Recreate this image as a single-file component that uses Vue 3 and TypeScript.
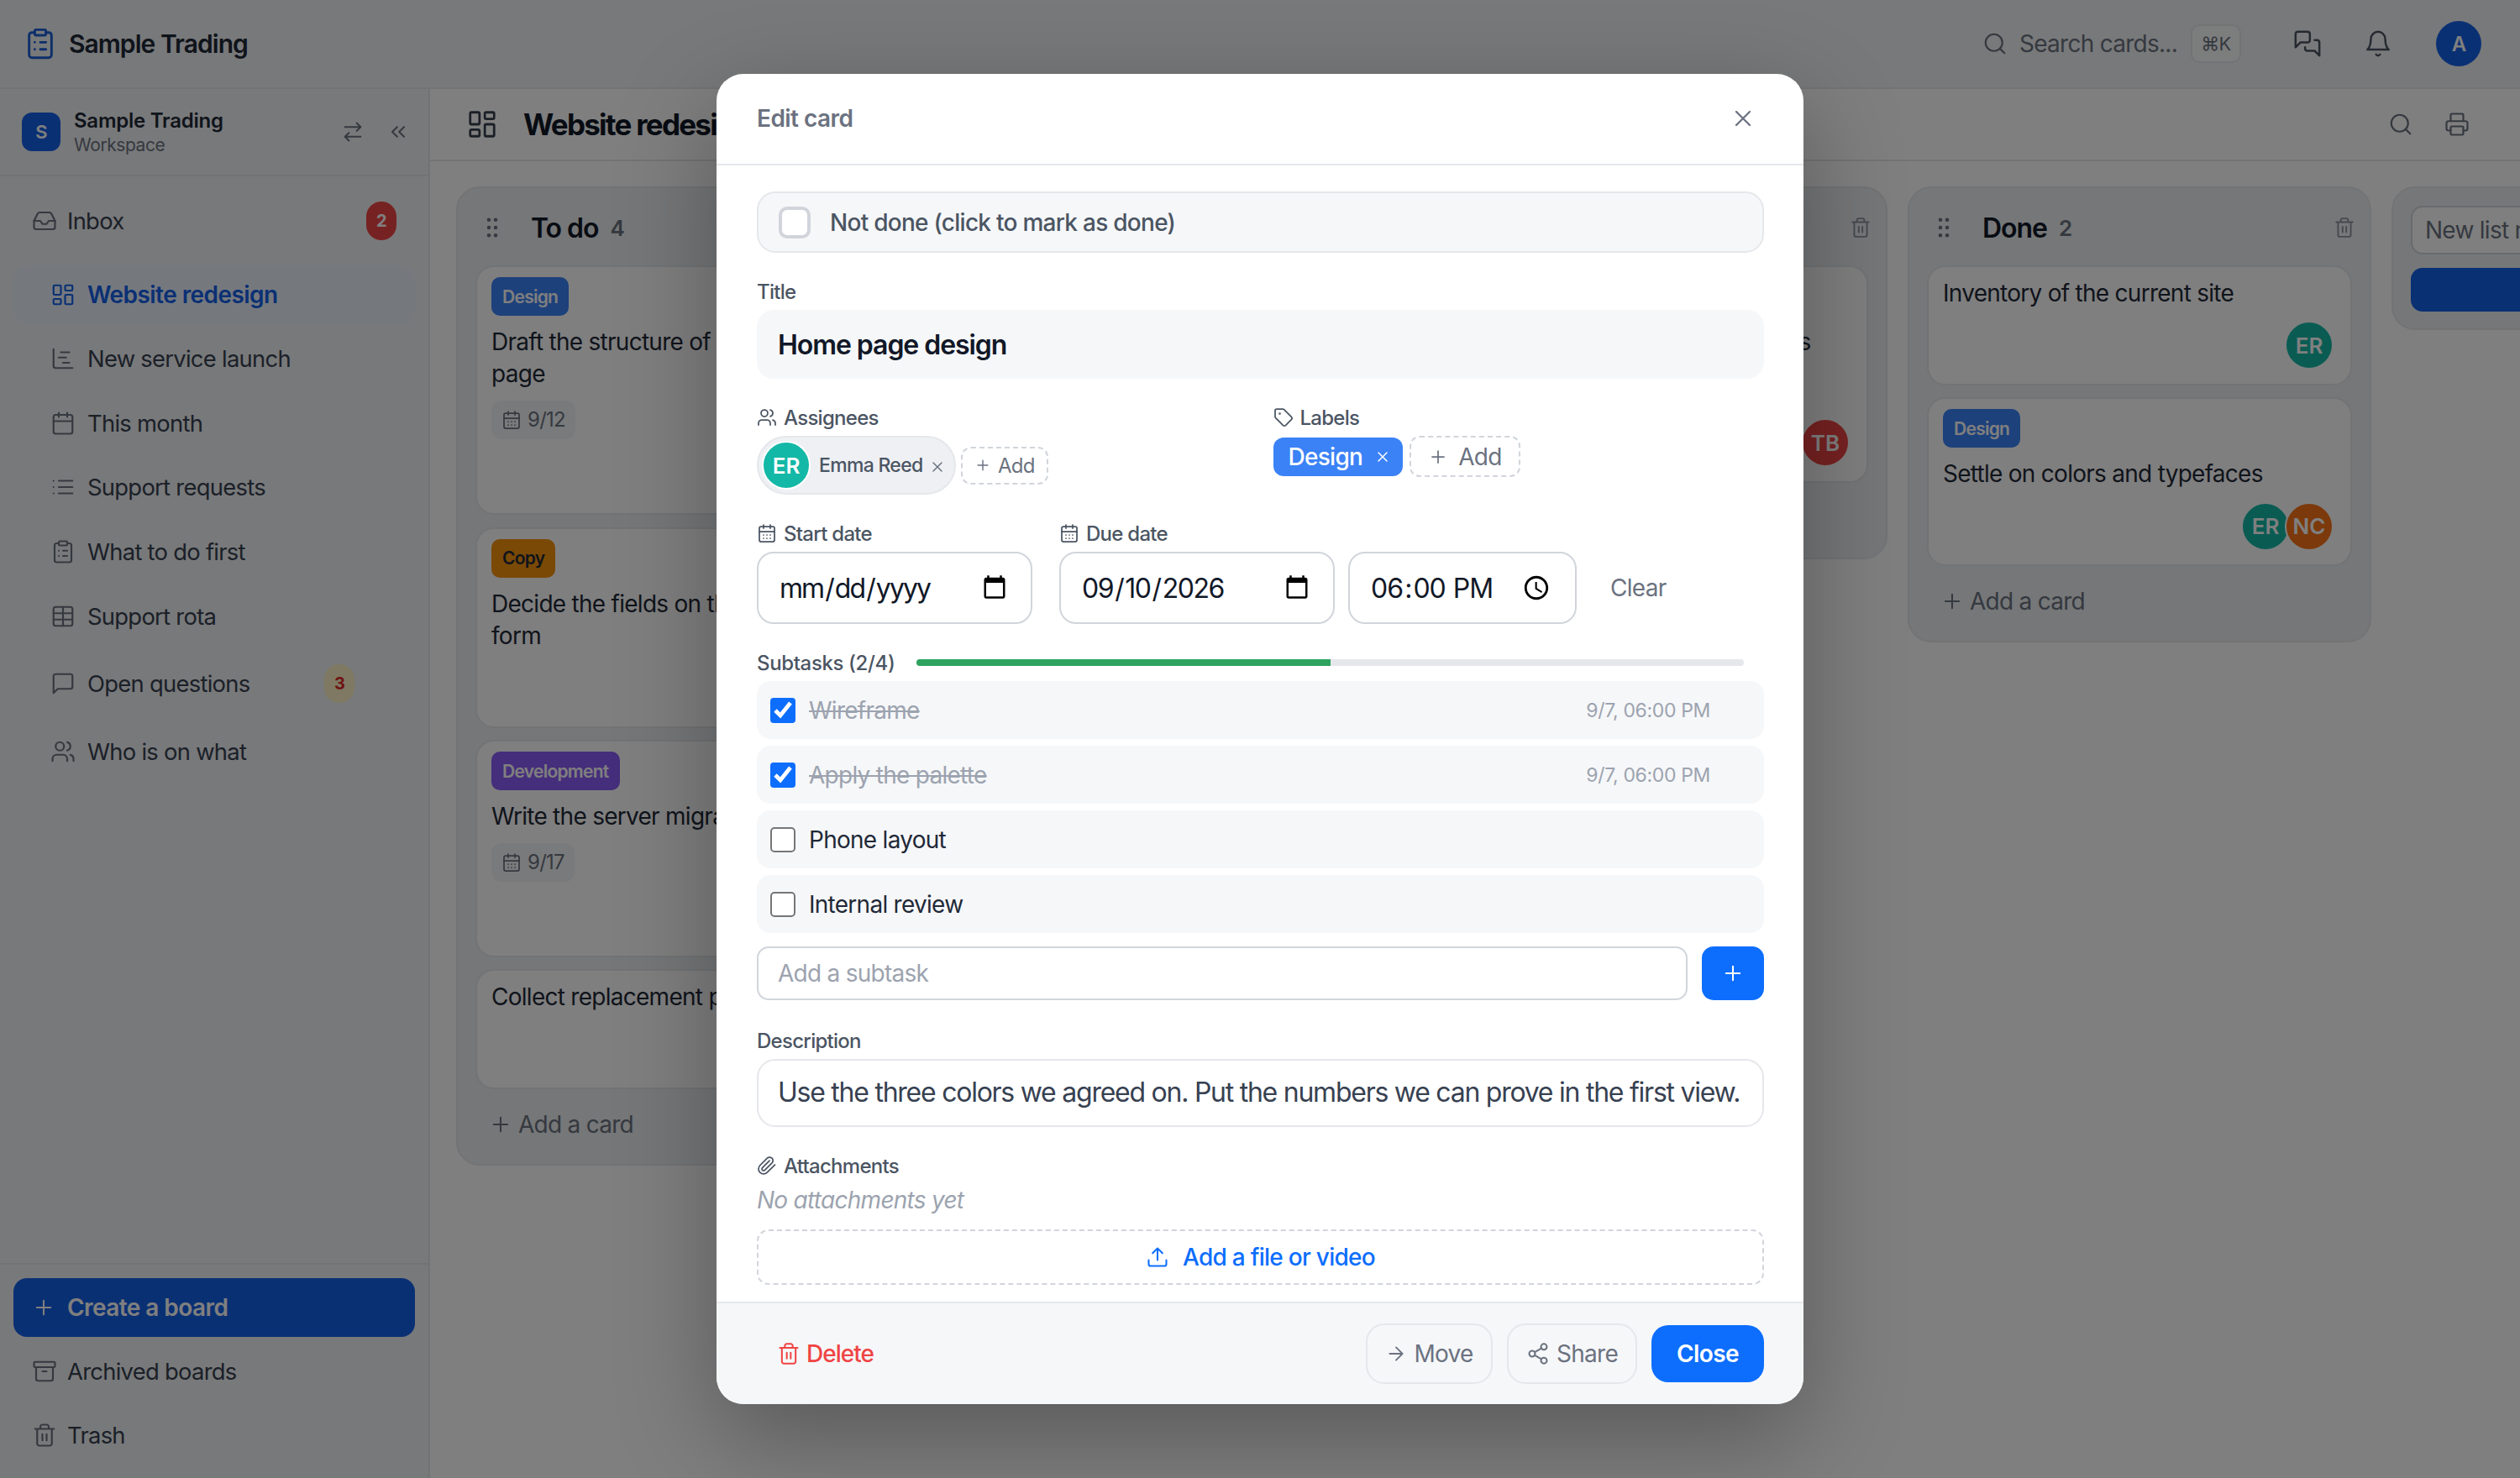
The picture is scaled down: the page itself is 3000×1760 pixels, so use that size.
<script setup lang="ts">
interface Card {
  tag?: { name: string; color: string; dark?: boolean }
  text: string
  date?: string
  people: { initials: string; color: string }[]
}

const icons: Record<string, string> = {
  clipboard: '<rect x="8" y="2" width="8" height="4" rx="1"/><path d="M16 4h2a2 2 0 0 1 2 2v14a2 2 0 0 1-2 2H6a2 2 0 0 1-2-2V6a2 2 0 0 1 2-2h2"/><path d="M12 11h4M12 16h4M8 11h.01M8 16h.01"/>',
  dashboard: '<rect x="3" y="3" width="7" height="9" rx="1"/><rect x="14" y="3" width="7" height="5" rx="1"/><rect x="14" y="12" width="7" height="9" rx="1"/><rect x="3" y="16" width="7" height="5" rx="1"/>',
  swap: '<path d="m16 3 4 4-4 4M20 7H4M8 21l-4-4 4-4M4 17h16"/>',
  chevrons: '<path d="m11 17-5-5 5-5M18 17l-5-5 5-5"/>',
  inbox: '<path d="M22 12h-6l-2 3h-4l-2-3H2"/><path d="M5.45 5.11 2 12v6a2 2 0 0 0 2 2h16a2 2 0 0 0 2-2v-6l-3.45-6.89A2 2 0 0 0 16.76 4H7.24a2 2 0 0 0-1.79 1.11z"/>',
  gantt: '<path d="M10 6h8M12 16h6M3 3v16a2 2 0 0 0 2 2h16M8 11h7"/>',
  calendar: '<path d="M8 2v4M16 2v4"/><rect x="3" y="4" width="18" height="18" rx="2"/><path d="M3 10h18"/>',
  calendarDays: '<path d="M8 2v4M16 2v4"/><rect x="3" y="4" width="18" height="18" rx="2"/><path d="M3 10h18M8 14h.01M12 14h.01M16 14h.01M8 18h.01M12 18h.01M16 18h.01"/>',
  list: '<path d="M3 6h.01M3 12h.01M3 18h.01M8 6h13M8 12h13M8 18h13"/>',
  table: '<path d="M12 3v18"/><rect x="3" y="3" width="18" height="18" rx="2"/><path d="M3 9h18M3 15h18"/>',
  message: '<path d="M21 15a2 2 0 0 1-2 2H7l-4 4V5a2 2 0 0 1 2-2h14a2 2 0 0 1 2 2z"/>',
  messages: '<path d="M14 9a2 2 0 0 1-2 2H6l-4 4V4a2 2 0 0 1 2-2h8a2 2 0 0 1 2 2z"/><path d="M18 9h2a2 2 0 0 1 2 2v11l-4-4h-6a2 2 0 0 1-2-2v-1"/>',
  users: '<path d="M16 21v-2a4 4 0 0 0-4-4H6a4 4 0 0 0-4 4v2"/><circle cx="9" cy="7" r="4"/><path d="M22 21v-2a4 4 0 0 0-3-3.87M16 3.13a4 4 0 0 1 0 7.75"/>',
  plus: '<path d="M5 12h14M12 5v14"/>',
  archive: '<rect x="2" y="3" width="20" height="5" rx="1"/><path d="M4 8v11a2 2 0 0 0 2 2h12a2 2 0 0 0 2-2V8M10 12h4"/>',
  trash: '<path d="M3 6h18M19 6v14c0 1-1 2-2 2H7c-1 0-2-1-2-2V6M8 6V4c0-1 1-2 2-2h4c1 0 2 1 2 2v2M10 11v6M14 11v6"/>',
  search: '<circle cx="11" cy="11" r="8"/><path d="m21 21-4.3-4.3"/>',
  bell: '<path d="M6 8a6 6 0 0 1 12 0c0 7 3 9 3 9H3s3-2 3-9"/><path d="M10.3 21a1.94 1.94 0 0 0 3.4 0"/>',
  printer: '<path d="M6 18H4a2 2 0 0 1-2-2v-5a2 2 0 0 1 2-2h16a2 2 0 0 1 2 2v5a2 2 0 0 1-2 2h-2"/><path d="M6 9V3a1 1 0 0 1 1-1h10a1 1 0 0 1 1 1v6"/><rect x="6" y="14" width="12" height="8" rx="1"/>',
  tag: '<path d="M12.586 2.586A2 2 0 0 0 11.172 2H4a2 2 0 0 0-2 2v7.172a2 2 0 0 0 .586 1.414l8.704 8.704a2.426 2.426 0 0 0 3.42 0l6.58-6.58a2.426 2.426 0 0 0 0-3.42z"/><circle cx="7.5" cy="7.5" r=".5"/>',
  x: '<path d="M18 6 6 18M6 6l12 12"/>',
  clip: '<path d="m21.44 11.05-9.19 9.19a6 6 0 0 1-8.49-8.49l8.57-8.57A4 4 0 1 1 18 8.84l-8.59 8.57a2 2 0 0 1-2.83-2.83l8.49-8.48"/>',
  upload: '<path d="M21 15v4a2 2 0 0 1-2 2H5a2 2 0 0 1-2-2v-4M17 8l-5-5-5 5M12 3v12"/>',
  arrow: '<path d="M5 12h14M12 5l7 7-7 7"/>',
  share: '<circle cx="18" cy="5" r="3"/><circle cx="6" cy="12" r="3"/><circle cx="18" cy="19" r="3"/><path d="m8.59 13.51 6.83 3.98M15.41 6.51l-6.82 3.98"/>',
  grip: '<circle cx="9" cy="5" r="1.7"/><circle cx="15" cy="5" r="1.7"/><circle cx="9" cy="12" r="1.7"/><circle cx="15" cy="12" r="1.7"/><circle cx="9" cy="19" r="1.7"/><circle cx="15" cy="19" r="1.7"/>'
}

const design = { name: 'Design', color: '#3b82f6' }
const er = { initials: 'ER', color: '#14b8a6' }
const nc = { initials: 'NC', color: '#f97316' }
const tb = { initials: 'TB', color: '#ef4444' }

const projects = [
  { name: 'Website redesign', icon: 'dashboard', active: true },
  { name: 'New service launch', icon: 'gantt' },
  { name: 'This month', icon: 'calendar' },
  { name: 'Support requests', icon: 'list' },
  { name: 'What to do first', icon: 'clipboard' },
  { name: 'Support rota', icon: 'table' },
  { name: 'Open questions', icon: 'message', badge: 3 },
  { name: 'Who is on what', icon: 'users' }
]

const columns: { name: string; count: number; cards: Card[] }[] = [
  {
    name: 'To do',
    count: 4,
    cards: [
      { tag: design, text: 'Draft the structure of the new home page', date: '9/12', people: [er] },
      { tag: { name: 'Copy', color: '#f5930b', dark: true }, text: 'Decide the fields on the new contact form', people: [nc] },
      { tag: { name: 'Development', color: '#8b5cf6' }, text: 'Write the server migration', date: '9/17', people: [tb] },
      { text: 'Collect replacement photos', people: [er] }
    ]
  },
  {
    name: 'In progress',
    count: 1,
    cards: [{ text: 'Home page design', people: [er] }]
  },
  {
    name: 'Review',
    count: 1,
    cards: [{ tag: design, text: 'Write a few home page headlines', date: '9/14', people: [tb] }]
  },
  {
    name: 'Done',
    count: 2,
    cards: [
      { text: 'Inventory of the current site', people: [er] },
      { tag: design, text: 'Settle on colors and typefaces', people: [er, nc] }
    ]
  }
]

const subtasks = [
  { name: 'Wireframe', done: true, when: '9/7, 06:00 PM' },
  { name: 'Apply the palette', done: true, when: '9/7, 06:00 PM' },
  { name: 'Phone layout', done: false, when: '' },
  { name: 'Internal review', done: false, when: '' }
]

const description = 'Use the three colors we agreed on. Put the numbers we can prove in the first view.'
</script>

<template>
  <div class="app">
    <header class="topbar">
      <svg class="ic logo-ic" viewBox="0 0 24 24" v-html="icons.clipboard" />
      <span class="brand">Sample Trading</span>
      <div class="top-right">
        <svg class="ic ic-15 muted" viewBox="0 0 24 24" v-html="icons.search" />
        <span class="search-text">Search cards...</span>
        <kbd class="kbd">⌘K</kbd>
        <svg class="ic ic-17 top-chat" viewBox="0 0 24 24" v-html="icons.messages" />
        <svg class="ic ic-17 top-bell" viewBox="0 0 24 24" v-html="icons.bell" />
        <span class="me">A</span>
      </div>
    </header>

    <div class="body">
      <aside class="sidebar">
        <div class="workspace">
          <span class="ws-tile">S</span>
          <div class="ws-names">
            <div class="ws-name">Sample Trading</div>
            <div class="ws-sub">Workspace</div>
          </div>
          <svg class="ic ic-14 muted ws-swap" viewBox="0 0 24 24" v-html="icons.swap" />
          <svg class="ic ic-14 muted ws-fold" viewBox="0 0 24 24" v-html="icons.chevrons" />
        </div>

        <nav class="nav">
          <a class="nav-item inbox">
            <svg class="ic ic-15" viewBox="0 0 24 24" v-html="icons.inbox" />
            <span class="nav-label">Inbox</span>
            <span class="badge badge-red">2</span>
          </a>
          <a
            v-for="p in projects"
            :key="p.name"
            class="nav-item project"
            :class="{ active: p.active }"
          >
            <svg class="ic ic-15" viewBox="0 0 24 24" v-html="icons[p.icon]" />
            <span class="nav-label">{{ p.name }}</span>
            <span v-if="p.badge" class="badge badge-soft">{{ p.badge }}</span>
          </a>
        </nav>

        <div class="side-bottom">
          <button class="create-btn">
            <svg class="ic ic-14" viewBox="0 0 24 24" v-html="icons.plus" />
            Create a board
          </button>
          <a class="nav-item">
            <svg class="ic ic-15" viewBox="0 0 24 24" v-html="icons.archive" />
            <span class="nav-label">Archived boards</span>
          </a>
          <a class="nav-item">
            <svg class="ic ic-15" viewBox="0 0 24 24" v-html="icons.trash" />
            <span class="nav-label">Trash</span>
          </a>
        </div>
      </aside>

      <main class="main">
        <div class="toolbar">
          <svg class="ic toolbar-ic" viewBox="0 0 24 24" v-html="icons.dashboard" />
          <h1 class="board-title">Website redesign</h1>
          <div class="toolbar-right">
            <svg class="ic ic-15 muted" viewBox="0 0 24 24" v-html="icons.search" />
            <svg class="ic ic-15 muted" viewBox="0 0 24 24" v-html="icons.printer" />
          </div>
        </div>

        <div class="board">
          <section v-for="col in columns" :key="col.name" class="column">
            <div class="col-head">
              <svg class="ic ic-16 grip" viewBox="0 0 24 24" v-html="icons.grip" />
              <span class="col-name">{{ col.name }}</span>
              <span class="col-count">{{ col.count }}</span>
              <svg class="ic ic-13 muted col-trash" viewBox="0 0 24 24" v-html="icons.trash" />
            </div>
            <div class="cards">
              <article v-for="card in col.cards" :key="card.text" class="card">
                <span
                  v-if="card.tag"
                  class="tag"
                  :class="{ 'tag-dark': card.tag.dark }"
                  :style="{ background: card.tag.color }"
                >{{ card.tag.name }}</span>
                <p class="card-text">{{ card.text }}</p>
                <span v-if="card.date" class="date-chip">
                  <svg class="ic ic-12" viewBox="0 0 24 24" v-html="icons.calendarDays" />
                  {{ card.date }}
                </span>
                <div class="people">
                  <span
                    v-for="u in card.people"
                    :key="u.initials"
                    class="avatar"
                    :style="{ background: u.color }"
                  >{{ u.initials }}</span>
                </div>
              </article>
            </div>
            <button class="add-card">
              <svg class="ic ic-14" viewBox="0 0 24 24" v-html="icons.plus" />
              Add a card
            </button>
          </section>

          <section class="column new-col">
            <input class="new-input" placeholder="New list name" />
            <button class="new-btn">Add list</button>
          </section>
        </div>
      </main>
    </div>

    <div class="overlay">
      <div class="modal">
        <div class="modal-head">
          <span class="modal-title">Edit card</span>
          <svg class="ic ic-16 muted" viewBox="0 0 24 24" v-html="icons.x" />
        </div>

        <div class="modal-body">
          <div class="status-row">
            <span class="status-box"></span>
            <span>Not done (click to mark as done)</span>
          </div>

          <div class="section">
            <label class="label">Title</label>
            <input class="title-input" value="Home page design" />
          </div>

          <div class="section two-col">
            <div>
              <label class="label">
                <svg class="ic ic-12" viewBox="0 0 24 24" v-html="icons.users" />
                Assignees
              </label>
              <div class="chip-row">
                <span class="person-chip">
                  <span class="avatar" style="background: #14b8a6">ER</span>
                  <span class="person-name">Emma Reed</span>
                  <svg class="ic ic-10 muted person-x" viewBox="0 0 24 24" v-html="icons.x" />
                </span>
                <span class="dash-btn small">
                  <svg class="ic ic-10" viewBox="0 0 24 24" v-html="icons.plus" />
                  Add
                </span>
              </div>
            </div>
            <div>
              <label class="label">
                <svg class="ic ic-12" viewBox="0 0 24 24" v-html="icons.tag" />
                Labels
              </label>
              <div class="chip-row top">
                <span class="label-chip">
                  Design
                  <svg class="ic ic-10" viewBox="0 0 24 24" v-html="icons.x" />
                </span>
                <span class="dash-btn">
                  <svg class="ic ic-12" viewBox="0 0 24 24" v-html="icons.plus" />
                  Add
                </span>
              </div>
            </div>
          </div>

          <div class="section date-row">
            <div>
              <label class="label">
                <svg class="ic ic-12" viewBox="0 0 24 24" v-html="icons.calendarDays" />
                Start date
              </label>
              <input class="field date-field start" type="date" />
            </div>
            <div>
              <label class="label">
                <svg class="ic ic-12" viewBox="0 0 24 24" v-html="icons.calendarDays" />
                Due date
              </label>
              <input class="field date-field due" type="date" value="2026-09-10" />
            </div>
            <input class="field time-field" type="time" value="18:00" />
            <button class="clear-btn">Clear</button>
          </div>

          <div class="section">
            <div class="sub-head">
              <span class="label inline">Subtasks (2/4)</span>
              <div class="progress"><div class="progress-fill" :style="{ width: '50%' }"></div></div>
            </div>
            <div class="sub-list">
              <div v-for="t in subtasks" :key="t.name" class="sub-row">
                <input class="sub-check" type="checkbox" :checked="t.done" />
                <span class="sub-name" :class="{ done: t.done }">{{ t.name }}</span>
                <span v-if="t.when" class="sub-when">{{ t.when }}</span>
              </div>
            </div>
            <div class="sub-add">
              <input class="sub-input" placeholder="Add a subtask" />
              <button class="sub-plus">
                <svg class="ic ic-14" viewBox="0 0 24 24" v-html="icons.plus" />
              </button>
            </div>
          </div>

          <div class="section desc-section">
            <label class="label">Description</label>
            <textarea class="desc" rows="1" :value="description"></textarea>
          </div>

          <div class="section">
            <label class="label">
              <svg class="ic ic-12" viewBox="0 0 24 24" v-html="icons.clip" />
              Attachments
            </label>
            <div class="no-files">No attachments yet</div>
            <button class="upload">
              <svg class="ic ic-14" viewBox="0 0 24 24" v-html="icons.upload" />
              Add a file or video
            </button>
          </div>
        </div>

        <div class="modal-foot">
          <button class="delete-btn">
            <svg class="ic ic-14" viewBox="0 0 24 24" v-html="icons.trash" />
            Delete
          </button>
          <div class="foot-right">
            <button class="ghost-btn move">
              <svg class="ic ic-13" viewBox="0 0 24 24" v-html="icons.arrow" />
              Move
            </button>
            <button class="ghost-btn share">
              <svg class="ic ic-14" viewBox="0 0 24 24" v-html="icons.share" />
              Share
            </button>
            <button class="close-btn">Close</button>
          </div>
        </div>
      </div>
    </div>
  </div>
</template>

<style scoped>
.app {
  zoom: 2;
  position: relative;
  width: 1500px;
  height: 880px;
  overflow: hidden;
  display: flex;
  flex-direction: column;
  background: #fff;
  color: #1f2937;
  font-family: Inter, "Liberation Sans", sans-serif;
  font-size: 14px;
  letter-spacing: -0.026em;
}

button, input, textarea {
  font-family: inherit;
  letter-spacing: -0.026em;
}

.ic {
  flex: none;
  fill: none;
  stroke: currentColor;
  stroke-width: 1.75;
  stroke-linecap: round;
  stroke-linejoin: round;
}
.ic-10 { width: 10px; height: 10px; }
.ic-12 { width: 12px; height: 12px; }
.ic-13 { width: 13px; height: 13px; }
.ic-14 { width: 14px; height: 14px; }
.ic-15 { width: 15px; height: 15px; }
.ic-16 { width: 16px; height: 16px; }
.ic-17 { width: 17px; height: 17px; }
.muted { color: #6b7280; }

.topbar {
  flex: none;
  height: 53px;
  display: flex;
  align-items: center;
  padding: 0 23px 0 14px;
  background: #f1f2f5;
  border-bottom: 1px solid #e5e7eb;
  box-sizing: border-box;
}
.logo-ic { width: 20px; height: 20px; color: #1d5fd6; }
.brand { margin-left: 7px; font-size: 15px; font-weight: 600; letter-spacing: -0.032em; }
.top-right { margin-left: auto; display: flex; align-items: center; }
.search-text { margin-left: 7px; color: #6b7280; }
.kbd {
  margin-left: 8px;
  width: 30px;
  height: 23px;
  display: flex;
  align-items: center;
  justify-content: center;
  font-family: inherit;
  font-size: 11px;
  color: #6b7280;
  background: #f9fafb;
  border: 1px solid #e5e7eb;
  border-radius: 5px;
  box-sizing: border-box;
}
.top-chat { margin-left: 31px; color: #4b5563; }
.top-bell { margin-left: 25px; color: #4b5563; }
.me {
  margin-left: 26px;
  width: 27px;
  height: 27px;
  border-radius: 50%;
  background: #1560e8;
  color: #fff;
  font-size: 12px;
  font-weight: 600;
  display: flex;
  align-items: center;
  justify-content: center;
}

.body { flex: 1; display: flex; min-height: 0; }

.sidebar {
  flex: none;
  width: 256px;
  display: flex;
  flex-direction: column;
  background: #f1f2f5;
  border-right: 1px solid #e5e7eb;
  box-sizing: border-box;
}
.workspace {
  flex: none;
  height: 52px;
  display: flex;
  align-items: center;
  padding: 0 13px;
  border-bottom: 1px solid #e5e7eb;
  box-sizing: border-box;
}
.ws-tile {
  width: 23px;
  height: 23px;
  border-radius: 6px;
  background: #1560e8;
  color: #fff;
  font-size: 11px;
  font-weight: 600;
  display: flex;
  align-items: center;
  justify-content: center;
}
.ws-names { margin-left: 8px; flex: 1; }
.ws-name { font-size: 12px; font-weight: 600; line-height: 15px; margin-top: 1px; letter-spacing: -0.01em; }
.ws-sub { font-size: 10.5px; line-height: 14px; color: #6b7280; letter-spacing: -0.02em; }
.ws-swap { margin-right: 13px; }
.ws-fold { margin-right: -2px; }

.nav { flex: 1; padding: 7px 8px 0; display: flex; flex-direction: column; gap: 3.3px; }
.nav-item {
  display: flex;
  align-items: center;
  padding: 8px 12px 8px 11px;
  line-height: 19px;
  color: #374151;
  border-radius: 8px;
}
.nav-item .ic { color: #6b7280; }
.nav-label { margin-left: 6px; font-size: 13.7px; }
.inbox { margin-bottom: 3.5px; }
.project { padding-left: 22px; }
.project .nav-label { margin-left: 7px; }
.active { background: #ebf2fd; color: #1560e8; font-weight: 600; }
.active .nav-label { font-size: 14px; letter-spacing: -0.02em; }
.active .ic { color: #1560e8; }
.badge {
  width: 18px;
  height: 23px;
  border-radius: 11px;
  font-size: 10px;
  font-weight: 700;
  display: flex;
  align-items: center;
  justify-content: center;
  margin-left: auto;
}
.badge-red { background: #ef4444; color: #fff; margin-right: -1px; }
.badge-soft { background: #fef3c7; color: #dc2626; margin-right: 24px; }

.side-bottom {
  flex: none;
  padding: 8px 8px 0;
  height: 128px;
  border-top: 1px solid #e5e7eb;
  box-sizing: border-box;
  display: flex;
  flex-direction: column;
  gap: 3px;
}
.create-btn {
  height: 35px;
  flex: none;
  display: flex;
  align-items: center;
  gap: 7px;
  padding: 0 11px;
  border: none;
  border-radius: 8px;
  background: #1560e8;
  color: #fff;
  font-size: 14px;
  font-weight: 600;
  letter-spacing: -0.02em;
}

.main { flex: 1; min-width: 0; display: flex; flex-direction: column; }
.toolbar {
  flex: none;
  height: 43px;
  display: flex;
  align-items: center;
  padding: 0 30px 0 21.5px;
  border-bottom: 1px solid #e5e7eb;
  box-sizing: border-box;
}
.toolbar-ic { width: 19px; height: 19px; color: #374151; }
.board-title { margin: 0 0 0 15px; font-size: 17.5px; font-weight: 700; color: #111827; letter-spacing: -0.05em; }
.toolbar-right { margin-left: auto; display: flex; gap: 18.5px; }

.board {
  flex: 1;
  display: flex;
  align-items: flex-start;
  gap: 12px;
  padding: 15px 0 0 15.5px;
  min-height: 0;
}
.column {
  flex: 0 0 276px;
  box-sizing: border-box;
  padding: 11px 10.5px 13.5px;
  background: #eceef1;
  border: 1px solid #e5e7eb;
  border-radius: 14px;
}
.col-head { display: flex; align-items: center; height: 25px; margin-bottom: 10px; }
.grip { margin-left: 2px; fill: #6b7280; stroke: none; }
.col-name { margin-left: 15px; font-size: 16px; font-weight: 600; color: #111827; letter-spacing: -0.032em; }
.col-count { margin-left: 7px; font-size: 13px; font-weight: 600; color: #6b7280; }
.col-trash { margin-left: auto; margin-right: -2px; color: #8b92a0; }

.cards { display: flex; flex-direction: column; gap: 7.2px; }
.card {
  background: #fff;
  border: 1px solid #e5e7eb;
  border-radius: 11px;
  padding: 6px 10px 8.2px 8.5px;
}
.tag {
  display: inline-flex;
  align-items: center;
  height: 23px;
  padding: 0 6.5px;
  border-radius: 5px;
  color: #fff;
  font-size: 10.5px;
  font-weight: 600;
  margin-bottom: 6px;
  vertical-align: top;
}
.tag-dark { color: #1f2937; }
.card-text { margin: 0; line-height: 19.2px; color: #1f2937; }
.date-chip {
  display: inline-flex;
  align-items: center;
  gap: 3.5px;
  height: 23px;
  margin-top: 6px;
  padding: 0 6px;
  background: #f3f4f6;
  border-radius: 6px;
  font-size: 12px;
  color: #6b7280;
  vertical-align: top;
}
.people { display: flex; justify-content: flex-end; margin-top: 7px; }
.avatar {
  width: 29px;
  height: 29px;
  box-sizing: border-box;
  flex: none;
  border: 1px solid #fff;
  border-radius: 50%;
  color: #fff;
  font-size: 13px;
  font-weight: 600;
  letter-spacing: 0;
  display: flex;
  align-items: center;
  justify-content: center;
}
.avatar + .avatar { margin-left: -3px; }
.add-card {
  display: flex;
  align-items: center;
  gap: 3.5px;
  margin: 11px 0 0 8px;
  padding: 0;
  height: 20px;
  border: none;
  background: none;
  color: #6b7280;
  font-size: 14px;
}
.new-col { padding-top: 10.5px; padding-bottom: 10px; }
.new-input {
  width: 100%;
  height: 29px;
  box-sizing: border-box;
  padding: 0 7.5px;
  font-size: 14px;
  background: #fff;
  border: 1px solid #d1d5db;
  border-radius: 7px;
}
.new-input::placeholder { color: #6b7280; }
.new-btn {
  display: block;
  width: 100%;
  height: 26px;
  margin-top: 8px;
  border: none;
  border-radius: 7px;
  background: #1560e8;
  color: #fff;
}

.overlay {
  position: absolute;
  inset: 0;
  background: rgba(0, 0, 0, 0.5);
  display: flex;
  align-items: center;
  justify-content: center;
}
.modal {
  width: 647px;
  height: 792px;
  display: flex;
  flex-direction: column;
  background: #fff;
  border-radius: 16px;
  overflow: hidden;
  box-shadow: 0 20px 60px rgba(0, 0, 0, 0.3);
}
.modal-head {
  flex: none;
  height: 54.5px;
  display: flex;
  align-items: center;
  justify-content: space-between;
  padding: 0 28px 1px 24px;
  border-bottom: 1px solid #e5e7eb;
  box-sizing: border-box;
}
.modal-title { font-size: 14px; font-weight: 600; color: #6b7280; letter-spacing: -0.02em; }
.modal-body { flex: 1; min-height: 0; padding: 15.5px 23.5px 0 24px; }

.status-row {
  height: 36.5px;
  box-sizing: border-box;
  display: flex;
  align-items: center;
  gap: 11.5px;
  padding: 0 12px;
  background: #f6f7f9;
  border: 1px solid #e5e7eb;
  border-radius: 11px;
  color: #4b5563;
  font-weight: 500;
}
.status-box {
  width: 19px;
  height: 19px;
  box-sizing: border-box;
  border: 2px solid #d1d5db;
  border-radius: 5px;
  background: #fff;
}

.section { margin-top: 14px; }
.label {
  display: flex;
  align-items: center;
  gap: 4px;
  height: 18px;
  margin-bottom: 2px;
  font-size: 12px;
  font-weight: 500;
  color: #4b5563;
}
.label.inline { margin: 0; flex: none; letter-spacing: -0.015em; }
.title-input {
  display: block;
  width: 100%;
  height: 41px;
  box-sizing: border-box;
  padding: 0 12.5px;
  border: none;
  border-radius: 10px;
  background: #f6f7f9;
  font-size: 16px;
  font-weight: 600;
  color: #111827;
  letter-spacing: -0.033em;
}
.two-col { display: grid; grid-template-columns: 1fr 1fr; gap: 15px; }
.chip-row { display: flex; align-items: center; gap: 3px; height: 35px; }
.chip-row.top { align-items: flex-start; gap: 4px; }
.person-chip {
  height: 35px;
  width: 118.5px;
  box-sizing: border-box;
  display: inline-flex;
  align-items: center;
  padding: 0 2px;
  background: #eef0f4;
  border-radius: 18px;
  border: 1px solid #e5e7eb;
}
.person-name { margin: 0 0 0 5px; font-size: 11.5px; font-weight: 500; color: #4b5563; letter-spacing: -0.03em; }
.person-x { margin: 2px 0 0 auto; margin-right: 3px; }
.dash-btn {
  display: inline-flex;
  align-items: center;
  gap: 6px;
  height: 24.5px;
  padding: 0 10px;
  border: 1px dashed #d1d5db;
  border-radius: 6px;
  box-sizing: border-box;
  color: #6b7280;
  font-size: 14px;
}
.dash-btn.small { height: 22.5px; padding: 0 7px; font-size: 12px; gap: 4px; }
.label-chip {
  display: inline-flex;
  align-items: center;
  gap: 7px;
  height: 23px;
  padding: 0 7px 0 9px;
  margin-top: 1px;
  background: #3b82f6;
  border-radius: 6px;
  color: #fff;
  font-weight: 500;
}
.date-row { display: flex; align-items: flex-end; }
.field {
  display: block;
  height: 43px;
  box-sizing: border-box;
  padding: 0 11.5px;
  border: 1px solid #d1d5db;
  border-radius: 10px;
  background: #fff;
  font-size: 16px;
  color: #111827;
  letter-spacing: -0.03em;
}
.date-field { width: 164px; margin-right: 16px; }
.date-field.start { letter-spacing: -0.06em; }
.date-field.due { letter-spacing: -0.045em; margin-right: 8px; }
.time-field { width: 136px; }
.clear-btn {
  height: 43px;
  margin-left: 8px;
  padding: 0 12px;
  border: none;
  background: none;
  color: #6b7280;
  font-size: 14px;
}
.sub-head { display: flex; align-items: center; height: 18px; margin-bottom: 2px; }
.progress {
  flex: 1;
  height: 4px;
  margin: 0 12px 0 13px;
  background: #e5e7eb;
  border-radius: 2px;
  overflow: hidden;
}
.progress-fill { height: 100%; background: #2ea35f; }
.sub-list { display: flex; flex-direction: column; gap: 4px; }
.sub-row {
  height: 34.5px;
  display: flex;
  align-items: center;
  padding: 0 32px 0 8px;
  background: #f6f7f9;
  border-radius: 8px;
}
.sub-check {
  width: 15px;
  height: 15px;
  margin: 0 8px 0 0;
  accent-color: #0d6efd;
}
.sub-name { color: #1f2937; }
.sub-name.done { color: #9ca3af; text-decoration: line-through; }
.sub-when { margin-left: auto; font-size: 11.5px; color: #9ca3af; letter-spacing: -0.015em; }
.sub-add { display: flex; gap: 8.5px; margin-top: 8px; }
.sub-input {
  flex: 1;
  height: 32px;
  box-sizing: border-box;
  padding: 0 11.5px;
  border: 1px solid #d1d5db;
  border-radius: 7px;
  font-size: 14px;
}
.sub-input::placeholder { color: #9ca3af; }
.sub-plus {
  width: 37px;
  height: 32px;
  display: flex;
  align-items: center;
  justify-content: center;
  padding: 0;
  border: none;
  border-radius: 7px;
  background: #0d6efd;
  color: #fff;
}
.desc-section { margin-top: 15px; }
.desc {
  display: block;
  width: 100%;
  height: 40.5px;
  box-sizing: border-box;
  padding: 9px 6px 9px 11.5px;
  border: 1px solid #e5e7eb;
  border-radius: 11px;
  font-size: 16px;
  line-height: 20px;
  color: #374151;
  resize: none;
  overflow: hidden;
  letter-spacing: -0.039em;
}
.no-files { height: 17px; line-height: 17px; margin-top: 3px; font-style: italic; color: #9ca3af; }
.upload {
  display: flex;
  align-items: center;
  justify-content: center;
  gap: 8px;
  width: 100%;
  height: 33px;
  margin-top: 9px;
  border: 1px dashed #d1d5db;
  border-radius: 7px;
  background: #fff;
  color: #0d6efd;
  font-size: 14px;
  font-weight: 500;
}
.modal-foot {
  flex: none;
  height: 61px;
  display: flex;
  align-items: center;
  justify-content: space-between;
  padding: 0 23.5px 0 24px;
  background: #f6f7f9;
  border-top: 1px solid #e5e7eb;
  box-sizing: border-box;
}
.delete-btn {
  display: flex;
  align-items: center;
  gap: 3.5px;
  padding: 0 12px;
  border: none;
  background: none;
  color: #ef4444;
  font-size: 14px;
  font-weight: 500;
  letter-spacing: -0.035em;
}
.foot-right { display: flex; align-items: center; gap: 8.5px; }
.ghost-btn {
  display: flex;
  align-items: center;
  justify-content: center;
  gap: 4px;
  height: 36px;
  padding: 0;
  border: 1px solid #e5e7eb;
  border-radius: 11px;
  background: #f6f7f9;
  color: #6b7280;
  font-size: 14px;
}
.move { width: 75.5px; }
.share { width: 77.5px; }
.close-btn {
  height: 34px;
  width: 67px;
  border: none;
  border-radius: 10px;
  background: #0d6efd;
  color: #fff;
  font-size: 14px;
  font-weight: 600;
  letter-spacing: -0.02em;
}
</style>
